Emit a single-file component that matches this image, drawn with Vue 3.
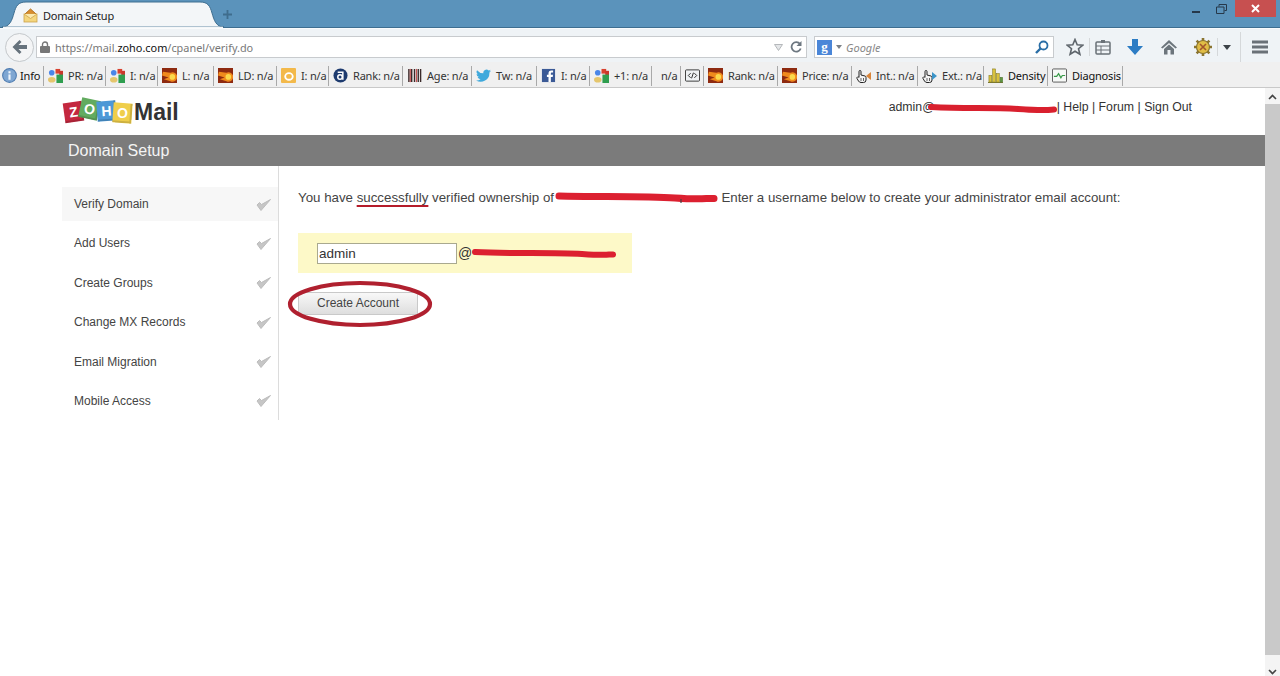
<template>
  <div class="screen">
    <svg class="defs" width="0" height="0">
      <symbol id="i-g" viewBox="0 0 16 16">
        <rect x="8" y="1" width="5" height="5" fill="#d8412f" />
        <rect x="12" y="3" width="4" height="6" fill="#c9372c" />
        <rect x="9" y="7" width="7" height="9" fill="#2f9e4f" />
        <circle cx="4" cy="5" r="3" fill="#4a86e8" />
        <ellipse cx="4" cy="12.5" rx="4" ry="3" fill="#e5c66d" />
      </symbol>
      <symbol id="i-fire" viewBox="0 0 16 16">
        <rect width="16" height="16" fill="#8e2a10" />
        <path d="M1 4 L9 5 A5 5 0 1 1 9 14 L2 12 L7 10 L0 8 Z" fill="#f08a1c" />
        <circle cx="11" cy="9.500" r="3" fill="#fbd84a" />
      </symbol>
      <symbol id="i-bing" viewBox="0 0 16 16">
        <rect width="16" height="16" rx="1" fill="#f3b94a" />
        <ellipse cx="8.500" cy="9" rx="4" ry="3.500" fill="none" stroke="#fff" stroke-width="2" />
      </symbol>
      <symbol id="i-alexa" viewBox="0 0 16 16">
        <circle cx="8" cy="8" r="7.500" fill="#1d3a6e" />
        <circle cx="7.500" cy="9.500" r="2.400" fill="none" stroke="#fff" stroke-width="1.600" />
        <path d="M5 4.500 H10.500 V12.500" fill="none" stroke="#fff" stroke-width="1.600" />
      </symbol>
      <symbol id="i-bars" viewBox="0 0 16 16">
        <path d="M2 1 V15 M5 1 V15 M8 1 V15 M12 1 V15 M14.500 1 V15" stroke="#3a2a2a" stroke-width="1.500" />
        <path d="M3.500 1 V15 M10 1 V15" stroke="#b33" stroke-width="1" />
      </symbol>
      <symbol id="i-tw" viewBox="0 0 16 16">
        <path d="M16 3.200 a6.500 6.500 0 0 1-1.900.5 3.300 3.300 0 0 0 1.500-1.800 6.600 6.600 0 0 1-2.100.8 3.300 3.300 0 0 0-5.600 3 9.300 9.300 0 0 1-6.800-3.400 3.300 3.300 0 0 0 1 4.400 3.300 3.300 0 0 1-1.500-.4 3.300 3.300 0 0 0 2.600 3.200 3.300 3.300 0 0 1-1.500.1 3.300 3.300 0 0 0 3.100 2.300 6.600 6.600 0 0 1-4.800 1.300 9.300 9.300 0 0 0 14.300-8.300 6.600 6.600 0 0 0 1.700-1.700z" fill="#3fa9dc" />
      </symbol>
      <symbol id="i-fb" viewBox="0 0 16 16">
        <rect x="1" y="1" width="14" height="14" fill="#3b5a96" />
        <path d="M10.500 15 V9.500 H12.500 L12.800 7.200 H10.500 V6 C10.500 5.200 10.800 4.800 11.700 4.800 H12.900 V2.700 H11 C9 2.700 8 3.900 8 5.700 V7.200 H6.300 V9.500 H8 V15 Z" fill="#fff" />
      </symbol>
      <symbol id="i-code" viewBox="0 0 16 16">
        <rect x=".5" y="2" width="15" height="12" rx="1" fill="#eef1f3" stroke="#333" />
        <path d="M6 5.500 L3.500 8 L6 10.500 M10 5.500 L12.500 8 L10 10.500 M9 5 L7 11" fill="none" stroke="#222" />
      </symbol>
      <symbol id="i-hand" viewBox="0 0 11 14">
        <path d="M3 7 V2.500 a1 1 0 0 1 2 0 V6 L9 7 a1.500 1.500 0 0 1 1 1.500 V11 a2.500 2.500 0 0 1-2.500 2.500 H5 a3 3 0 0 1-2.500-1.500 L1 9.500 a1 1 0 0 1 2-1 Z" fill="#f4f4f4" stroke="#222" />
        <path d="M5 9 V12 M7.500 9 V12" stroke="#222" stroke-width=".7" />
      </symbol>
      <symbol id="i-density" viewBox="0 0 16 16">
        <path d="M0 15.500 H16" stroke="#6b6a22" />
        <rect x="1" y="8" width="3" height="7" fill="#d9c23c" stroke="#84791e" stroke-width=".6" />
        <rect x="5" y="1" width="3" height="14" fill="#d9c23c" stroke="#84791e" stroke-width=".6" />
        <rect x="9" y="6" width="3" height="9" fill="#d9c23c" stroke="#84791e" stroke-width=".6" />
        <rect x="13" y="10" width="2.500" height="5" fill="#5e9a3f" stroke="#4b6f2e" stroke-width=".6" />
      </symbol>
      <symbol id="i-diag" viewBox="0 0 16 16">
        <rect x=".5" y="1" width="15" height="14" rx="1" fill="#f6f8f6" stroke="#555" />
        <path d="M2 9 H5 L7 6 L9.500 10.500 L11 8 H14" fill="none" stroke="#3a9a4a" stroke-width="1.300" />
      </symbol>
      <symbol id="i-info" viewBox="0 0 14 14">
        <circle cx="7" cy="7" r="6.400" fill="#7ea6d2" stroke="#4d7bb0" />
        <rect x="6" y="3" width="2" height="2" fill="#eef4fb" />
        <rect x="6" y="6" width="2" height="5" fill="#eef4fb" />
      </symbol>
    </svg>

    <div class="titlebar">
      <div class="tab">
        <svg class="tab-shape" width="222" height="28" viewBox="0 0 222 28">
          <path d="M0 27 C8 27 10 20 12 13 C14 6 16 2 24 2 H198 C206 2 208 6 210 13 C212 20 214 27 222 27 Z" fill="#f3f6f8" stroke="#3e6e90" />
          <path d="M1 27.500 H221" stroke="#f3f6f8" stroke-width="1.500" />
        </svg>
        <svg class="tab-icon" width="15" height="15" viewBox="0 0 15 15">
          <path d="M2 6 L7.500 1 L13 6" fill="#d98d2e" stroke="#b0701c" />
          <rect x="1" y="6" width="13" height="8" fill="#f4d67e" stroke="#caa24b" stroke-width=".8" />
          <path d="M1 6 L7.500 10.500 L14 6" fill="#fbe9ae" stroke="#caa24b" stroke-width=".8" />
        </svg>
        <span class="tab-title">Domain Setup</span>
      </div>
      <svg class="newtab" width="9" height="9" viewBox="0 0 9 9">
        <path d="M4.500 0 V9 M0 4.500 H9" stroke="#3f6d8d" stroke-width="1.800" />
      </svg>
      <div class="winctl">
        <svg width="10" height="10" viewBox="0 0 10 10"><path d="M1 7 H9" stroke="#26384a" stroke-width="2" /></svg>
        <svg class="win-restore" width="11" height="10" viewBox="0 0 11 10">
          <path d="M3 2.500 V.5 H10.500 V6.500 H8.500 M.5 3 H8 V9.500 H.5 Z" fill="none" stroke="#26384a" />
        </svg>
        <div class="win-close">
          <svg width="9" height="9" viewBox="0 0 9 9"><path d="M1 1 L8 8 M8 1 L1 8" stroke="#fff" stroke-width="2" /></svg>
        </div>
      </div>
    </div>

    <div class="navbar">
      <div class="back">
        <svg width="16" height="14" viewBox="0 0 16 14">
          <path d="M7.500 0 L0.500 7 L7.500 14 L9.500 12 L6.500 9 H15 V5 H6.500 L9.500 2 Z" fill="#66727c" />
        </svg>
      </div>
      <div class="urlbox">
        <svg class="lock" width="10" height="12" viewBox="0 0 10 12">
          <path d="M2.500 5 V3.500 a2.500 2.500 0 0 1 5 0 V5" fill="none" stroke="#777" stroke-width="1.400" />
          <rect y="5" width="10" height="7" rx="1" fill="#777" />
        </svg>
        <span class="url">https://mail.<b>zoho.com</b>/cpanel/verify.do</span>
        <svg class="url-drop" width="9" height="7" viewBox="0 0 9 7"><path d="M.5 .5 H8.500 L4.500 6.500 Z" fill="#e4e6e8" stroke="#b5b8bb" /></svg>
        <svg width="12" height="12" viewBox="0 0 12 12">
          <path d="M10 3 A4.700 4.700 0 1 0 10.700 7.500" fill="none" stroke="#6d7780" stroke-width="1.800" />
          <path d="M11.500 0 V5 H6.500 Z" fill="#6d7780" />
        </svg>
      </div>
      <div class="searchbox">
        <span class="g-tile">g</span>
        <svg class="search-drop" width="6" height="4" viewBox="0 0 6 4"><path d="M0 0 H6 L3 4 Z" fill="#7a8188" /></svg>
        <span class="search-hint">Google</span>
        <svg width="14" height="14" viewBox="0 0 14 14">
          <circle cx="8.500" cy="5.500" r="4" fill="none" stroke="#2a6ea6" stroke-width="1.800" />
          <path d="M5.500 8.500 L1 13" stroke="#2a6ea6" stroke-width="2.400" />
        </svg>
      </div>
      <svg class="tool star" width="18" height="18" viewBox="0 0 18 18">
        <path d="M9 1.500 L11.200 6.700 L16.800 7.100 L12.500 10.700 L13.900 16.200 L9 13.200 L4.100 16.200 L5.500 10.700 L1.200 7.100 L6.800 6.700 Z" fill="none" stroke="#5f666c" stroke-width="1.600" />
      </svg>
      <span class="tool-sep sep-a"></span>
      <svg class="tool list" width="18" height="18" viewBox="0 0 18 18">
        <rect x="2" y="4" width="14" height="12" rx="1" fill="none" stroke="#6a7177" stroke-width="1.500" />
        <rect x="7" y="2" width="4" height="3" fill="#6a7177" />
        <path d="M2 8 H16 M2 12 H16 M7 8 V16" stroke="#6a7177" />
      </svg>
      <svg class="tool dl" width="18" height="18" viewBox="0 0 18 18">
        <path d="M6 1 H12 V8 H17 L9 17 L1 8 H6 Z" fill="#2c7cc4" />
      </svg>
      <svg class="tool home" width="18" height="18" viewBox="0 0 18 18">
        <path d="M9 2 L1 9.500 L2.500 10.500 L9 5 L15.500 10.500 L17 9.500 Z" fill="#6c757c" />
        <path d="M4 11 L9 6.500 L14 11 V16.500 H10.500 V12 H7.500 V16.500 H4 Z" fill="#6c757c" />
      </svg>
      <svg class="tool gear" width="18" height="18" viewBox="0 0 18 18">
        <path d="M9 0 V18 M0 9 H18 M2.600 2.600 L15.400 15.400 M15.400 2.600 L2.600 15.400" stroke="#8a7430" stroke-width="2.600" />
        <circle cx="9" cy="9" r="6.500" fill="#e0bd45" stroke="#8a7430" stroke-width="1.200" />
        <path d="M6 6 L12 12 M12 6 L6 12" stroke="#a2552c" stroke-width="1.600" />
      </svg>
      <span class="tool-sep sep-a"></span>
      <svg class="tool caret" width="10" height="5" viewBox="0 0 10 5"><path d="M1 0 H9 L5 5 Z" fill="#3c4248" /></svg>
      <span class="tool-sep sep-b"></span>
      <svg class="tool menu" width="18" height="14" viewBox="0 0 18 14">
        <path d="M1 2 H17 M1 7 H17 M1 12 H17" stroke="#6a7177" stroke-width="2.800" />
      </svg>
    </div>

    <div class="seobar">
      <div
        v-for="item in seoItems"
        :key="item.end"
        class="seo-item"
        :class="{ 'no-icon': !item.icon }"
        :style="{ width: item.width + 'px' }"
      >
        <span v-if="item.icon" class="seo-icon">
          <svg :width="item.hand ? 11 : 15" :height="item.hand ? 14 : 15">
            <use :href="'#i-' + item.icon" />
          </svg>
          <svg v-if="item.hand" class="hand-arrow" width="5" height="8" viewBox="0 0 5 8">
            <path :d="item.hand === 'in' ? 'M5 0 V8 L0 4 Z' : 'M0 0 V8 L5 4 Z'" :fill="item.hand === 'in' ? '#d9853a' : '#3b94c8'" />
          </svg>
        </span>
        <span v-if="item.label" class="seo-label" :class="{ dark: item.dark }">{{ item.label }}</span>
      </div>
    </div>

    <div class="window">
      <div class="page">
        <header class="page-head">
          <div class="logo">
            <div class="cubes">
              <span class="cube c-red">Z</span>
              <span class="cube c-green">O</span>
              <span class="cube c-blue">H</span>
              <span class="cube c-yellow">O</span>
            </div>
            <span class="logo-mail">Mail</span>
          </div>
          <div class="account">
            admin@<svg class="scrawl" width="129" height="9" viewBox="0 0 129 9"><path d="M3 3 C40 5 60 3 90 5 S115 6 126 5.500" fill="none" stroke="#d9202e" stroke-width="6" stroke-linecap="round" /></svg>| Help | Forum | Sign Out
          </div>
        </header>
        <div class="band">Domain Setup</div>
        <div class="setup">
          <nav class="steps">
            <div v-for="(step, i) in steps" :key="step" class="step" :class="{ active: i === 0 }">
              <span>{{ step }}</span>
              <svg width="15" height="13" viewBox="0 0 15 13">
                <path d="M1 7 L5 12.500 L14.500 1.500 L5.500 6.500 L3.500 4.500 Z" fill="#c6c6c6" stroke="#bcbcbc" />
              </svg>
            </div>
          </nav>
          <main class="verify">
            <p class="message">
              You have <span class="ok">successfully</span> verified ownership of
              <svg class="scrawl domain" width="163" height="12" viewBox="0 0 163 12"><path d="M4 4 C40 5 90 4 120 6 S150 6 159 6.500" fill="none" stroke="#dc2030" stroke-width="7" stroke-linecap="round" /><path d="M126 7 V11" stroke="#444" stroke-width="1.200" /></svg>
              Enter a username below to create your administrator email account:
            </p>
            <div class="username">
              <input class="name-input" type="text" value="admin" />
              <span class="at">@</span>
              <svg class="scrawl" width="144" height="9" viewBox="0 0 144 9"><path d="M3 3 C40 5 80 3 110 5 S135 5 141 5.500" fill="none" stroke="#dc2030" stroke-width="6" stroke-linecap="round" /></svg>
            </div>
            <div class="create-wrap">
              <button class="create" type="button">Create Account</button>
              <svg class="circle-mark" width="146" height="50" viewBox="0 0 146 50">
                <ellipse cx="73" cy="25" rx="70" ry="21" fill="none" stroke="#b0202f" stroke-width="4.200" />
              </svg>
            </div>
          </main>
        </div>
      </div>
      <div class="scrollbar">
        <div class="sb-btn">
          <svg width="9" height="6" viewBox="0 0 9 6"><path d="M1 5 L4.500 1.500 L8 5" fill="none" stroke="#444" stroke-width="1.600" /></svg>
        </div>
        <div class="sb-thumb"></div>
        <div class="sb-btn bottom">
          <svg width="9" height="6" viewBox="0 0 9 6"><path d="M1 1 L4.500 4.500 L8 1" fill="none" stroke="#444" stroke-width="1.600" /></svg>
        </div>
      </div>
    </div>
  </div>
</template>

<script setup>
const raw = [
  { icon: "info", label: "Info", end: 44, dark: true },
  { icon: "g", label: "PR: n/a", end: 106 },
  { icon: "g", label: "I: n/a", end: 158 },
  { icon: "fire", label: "L: n/a", end: 214 },
  { icon: "fire", label: "LD: n/a", end: 277 },
  { icon: "bing", label: "I: n/a", end: 329 },
  { icon: "alexa", label: "Rank: n/a", end: 403 },
  { icon: "bars", label: "Age: n/a", end: 472 },
  { icon: "tw", label: "Tw: n/a", end: 537 },
  { icon: "fb", label: "I: n/a", end: 590 },
  { icon: "g", label: "+1: n/a", end: 652 },
  { label: "n/a", end: 681 },
  { icon: "code", end: 704 },
  { icon: "fire", label: "Rank: n/a", end: 778 },
  { icon: "fire", label: "Price: n/a", end: 852 },
  { icon: "hand", hand: "in", label: "Int.: n/a", end: 918 },
  { icon: "hand", hand: "out", label: "Ext.: n/a", end: 984 },
  { icon: "density", label: "Density", end: 1048, dark: true },
  { icon: "diag", label: "Diagnosis", end: 1123, dark: true },
];

const seoItems = raw.map((item, i) => ({
  ...item,
  width: item.end - (i ? raw[i - 1].end : 0),
}));

const steps = [
  "Verify Domain",
  "Add Users",
  "Create Groups",
  "Change MX Records",
  "Email Migration",
  "Mobile Access",
];
</script>

<style>
html,
body {
  margin: 0;
  background: #fff;
}
</style>

<style scoped>
.screen {
  width: 1280px;
  height: 676px;
  overflow: hidden;
  display: flex;
  flex-direction: column;
  font-family: "Liberation Sans", Arial, sans-serif;
  color: #444;
}

.defs {
  position: absolute;
}

/* browser chrome */
.titlebar {
  height: 28px;
  flex: none;
  display: flex;
  background: #5b93bb;
  box-sizing: border-box;
  border-bottom: 1px solid #3e6e90;
}

.tab {
  position: relative;
  width: 222px;
  height: 28px;
  margin-left: 2px;
  display: flex;
  align-items: center;
  padding: 2px 0 0 21px;
  box-sizing: border-box;
}

.tab-shape {
  position: absolute;
  left: 0;
  top: 0;
}

.tab-icon,
.tab-title {
  position: relative;
}

.tab-title {
  margin-left: 5px;
  font: 11px "Noto Sans", sans-serif;
  letter-spacing: -0.2px;
  color: #222;
}

.newtab {
  margin: 10px 0 0 -1px;
}

.winctl {
  margin-left: auto;
  display: flex;
  align-items: flex-start;
}

.winctl > svg {
  margin-top: 5px;
}

.winctl > .win-restore {
  margin: 4px 0 0 15px;
}

.win-close {
  width: 41px;
  height: 17px;
  margin: 0 4px 0 8px;
  background: #c75050;
  display: flex;
  align-items: center;
  justify-content: center;
}

.navbar {
  height: 34px;
  flex: none;
  display: flex;
  align-items: center;
  background: #eff3f6;
  box-sizing: border-box;
  padding: 3px 0 0 5px;
  border-top: 1px solid #f9fbfc;
}

.back {
  width: 29px;
  height: 29px;
  flex: none;
  border-radius: 50%;
  border: 1px solid #c4c8cb;
  background: #f4f5f6;
  display: flex;
  align-items: center;
  justify-content: center;
  box-sizing: border-box;
}

.urlbox,
.searchbox {
  height: 22px;
  background: #fff;
  border: 1px solid #c8cbce;
  box-sizing: border-box;
  display: flex;
  align-items: center;
  flex: none;
}

.urlbox {
  width: 771px;
  margin-left: 2px;
  padding: 0 4px 0 3px;
}

.url {
  margin-left: 5px;
  font: 10.9px "Noto Sans", sans-serif;
  color: #777;
}

.url b {
  font-weight: 400;
  color: #111;
}

.url-drop {
  margin-left: auto;
  margin-right: 7px;
}

.searchbox {
  width: 240px;
  margin-left: 7px;
  padding: 0 4px 0 2px;
}

.g-tile {
  width: 15px;
  height: 15px;
  background: #4a86d8;
  color: #fff;
  font: bold 13px/13px "Liberation Serif", serif;
  text-align: center;
}

.search-drop {
  margin-left: 4px;
}

.search-hint {
  margin-left: 4px;
  font: italic 11px "Noto Sans", sans-serif;
  color: #888;
}

.searchbox svg:last-child {
  margin-left: auto;
}

.tool {
  flex: none;
}

.tool-sep {
  width: 1px;
  flex: none;
  height: 18px;
  background: #d5d8da;
}

.star {
  margin-left: 12px;
}

.sep-a {
  margin-left: 5px;
}

.list {
  margin-left: 4px;
}

.dl {
  margin-left: 14px;
}

.home,
.gear {
  margin-left: 16px;
}

.caret {
  margin-left: 4px;
}

.sep-b {
  margin-left: 8px;
  height: 30px;
}

.menu {
  margin-left: 10px;
}

.seobar {
  height: 26px;
  flex: none;
  display: flex;
  align-items: center;
  background: #f0f0f0;
  box-sizing: border-box;
  padding-top: 2px;
  border-bottom: 1px solid #c9c9c9;
}

.seo-item {
  height: 20px;
  flex: none;
  box-sizing: border-box;
  display: flex;
  align-items: center;
  gap: 5px;
  padding-left: 4px;
  border-right: 1px solid #a9a9a9;
}

.seo-item:first-child {
  padding-left: 2px;
  gap: 3px;
}

.seo-item.no-icon {
  padding-left: 9px;
}

.seo-icon {
  width: 15px;
  height: 15px;
  flex: none;
  display: flex;
  align-items: center;
}

.hand-arrow {
  margin-left: -1px;
}

.seo-label {
  font: 11px "Noto Sans", sans-serif;
  letter-spacing: -0.2px;
  color: #333;
  white-space: nowrap;
}

.seo-label.dark {
  color: #111;
}

/* page */
.window {
  flex: 1;
  min-height: 0;
  display: flex;
}

.page {
  flex: 1;
  min-width: 0;
}

.page-head {
  height: 47px;
  box-sizing: border-box;
  display: flex;
  justify-content: space-between;
  padding: 0 73px 0 64px;
}

.logo {
  display: flex;
  align-items: center;
}

.cubes {
  display: flex;
  align-items: center;
  width: 70px;
}

.cube {
  width: 19px;
  height: 20px;
  flex: none;
  color: #fff;
  font: bold 14px/20px "Liberation Sans", sans-serif;
  text-align: center;
  margin-right: -2.600px;
  box-shadow: inset -2px -2px 0 rgba(0, 0, 0, 0.14);
}

.c-red {
  background: #c4283f;
  transform: rotate(-8deg);
  margin-top: 1px;
}

.c-green {
  background: #62ab5f;
  transform: rotate(12deg);
  margin-top: -5px;
}

.c-blue {
  background: #4c98d6;
  transform: rotate(-4deg);
  margin-top: -1px;
}

.c-yellow {
  background: #efce4b;
  transform: rotate(4deg);
  margin-top: 2px;
}

.logo-mail {
  margin-top: 2px;
  font: bold 23px "Liberation Sans", sans-serif;
  color: #333;
}

.account {
  padding-top: 12px;
  font-size: 12.3px;
  color: #333;
  white-space: nowrap;
}

.scrawl {
  vertical-align: middle;
}

.account .scrawl {
  margin: 2px 0 0 -7px;
}

.band {
  height: 31px;
  padding-left: 68px;
  background: #7b7b7b;
  color: #f4f4f4;
  font-size: 16px;
  line-height: 31px;
}

.setup {
  display: flex;
}

.steps {
  width: 217px;
  height: 254px;
  flex: none;
  box-sizing: border-box;
  margin-left: 62px;
  padding-top: 21px;
  border-right: 1px solid #dcdcdc;
  display: flex;
  flex-direction: column;
  gap: 5.400px;
}

.step {
  height: 34px;
  flex: none;
  display: flex;
  align-items: center;
  justify-content: space-between;
  padding: 0 7px 0 12px;
  font-size: 12px;
  color: #444;
}

.step.active {
  background: #f7f7f7;
}

.verify {
  padding-left: 19px;
}

.message {
  margin: 24px 0 0;
  font-size: 13.3px;
  line-height: 16px;
  color: #444;
  white-space: nowrap;
}

.ok {
  text-decoration: underline 2px #b51c2a;
  text-underline-offset: 3px;
  text-decoration-skip-ink: none;
}

.domain {
  margin: 0 0 0 -3px;
}

.username {
  margin-top: 27px;
  width: 334px;
  height: 40px;
  box-sizing: border-box;
  padding-left: 19px;
  background: #fdf9c8;
  display: flex;
  align-items: center;
}

.name-input {
  width: 140px;
  height: 21px;
  box-sizing: border-box;
  border: 1px solid #a9a98f;
  padding: 0 1px;
  font: 13.5px "Liberation Sans", sans-serif;
  color: #333;
  background: #fff;
}

.at {
  margin-left: 1px;
  font-size: 14px;
  color: #333;
}

.create-wrap {
  position: relative;
  margin-top: 19px;
  width: 120px;
  height: 23px;
}

.create {
  width: 120px;
  height: 23px;
  padding: 0 0 1px;
  border: 1px solid #c9c9c9;
  background: linear-gradient(#f8f8f8, #dedede);
  font: 12px "Liberation Sans", sans-serif;
  color: #444;
}

.circle-mark {
  position: absolute;
  left: -11px;
  top: -13px;
  pointer-events: none;
}

.scrollbar {
  width: 15px;
  flex: none;
  display: flex;
  flex-direction: column;
  background: #f0f0f0;
}

.sb-btn {
  height: 16px;
  flex: none;
  display: flex;
  align-items: center;
  justify-content: center;
  padding-top: 2px;
  box-sizing: border-box;
  background: #f4f4f4;
}

.sb-btn.bottom {
  height: 21px;
  align-items: flex-end;
  padding: 0 0 1px;
}

.sb-thumb {
  flex: 1;
  background: #c9c9c9;
}
</style>
